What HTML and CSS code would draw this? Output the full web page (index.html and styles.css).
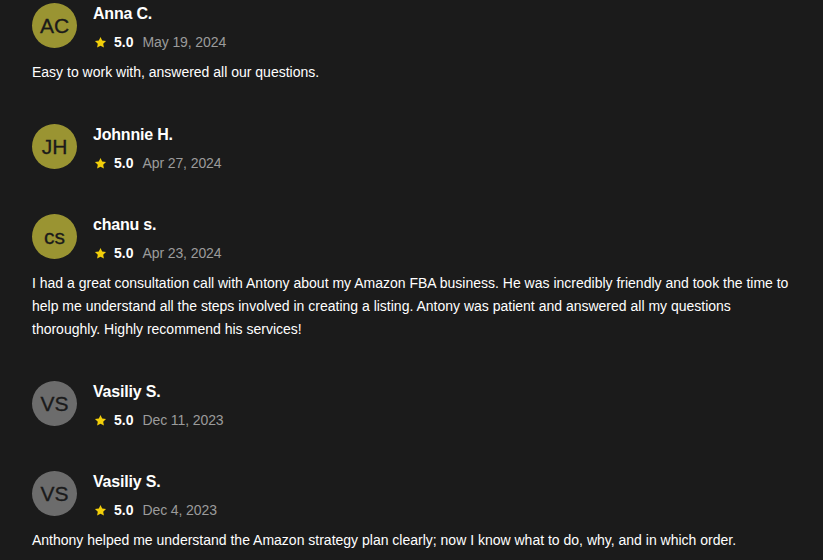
FILE: index.html
```html
<!DOCTYPE html>
<html>
<head>
<meta charset="utf-8">
<link rel="stylesheet" href="styles.css">
</head>
<body>
<div class="reviews">
  <div class="review">
    <div class="head">
      <div class="avatar olive">AC</div>
      <div class="info">
        <div class="name">Anna C.</div>
        <div class="rating"><svg class="star" viewBox="0 0 24 24"><path d="M12 1.8l3.1 6.5 7.1.9-5.2 4.9 1.3 7.1L12 17.8l-6.3 3.4 1.3-7.1-5.2-4.9 7.1-.9z"/></svg><span class="score">5.0</span><span class="date">May 19, 2024</span></div>
      </div>
    </div>
    <p class="text">Easy to work with, answered all our questions.</p>
  </div>
  <div class="review">
    <div class="head">
      <div class="avatar olive">JH</div>
      <div class="info">
        <div class="name">Johnnie H.</div>
        <div class="rating"><svg class="star" viewBox="0 0 24 24"><path d="M12 1.8l3.1 6.5 7.1.9-5.2 4.9 1.3 7.1L12 17.8l-6.3 3.4 1.3-7.1-5.2-4.9 7.1-.9z"/></svg><span class="score">5.0</span><span class="date">Apr 27, 2024</span></div>
      </div>
    </div>
  </div>
  <div class="review">
    <div class="head">
      <div class="avatar olive">cs</div>
      <div class="info">
        <div class="name">chanu s.</div>
        <div class="rating"><svg class="star" viewBox="0 0 24 24"><path d="M12 1.8l3.1 6.5 7.1.9-5.2 4.9 1.3 7.1L12 17.8l-6.3 3.4 1.3-7.1-5.2-4.9 7.1-.9z"/></svg><span class="score">5.0</span><span class="date">Apr 23, 2024</span></div>
      </div>
    </div>
    <p class="text">I had a great consultation call with Antony about my Amazon FBA business. He was incredibly friendly and took the time to help me understand all the steps involved in creating a listing. Antony was patient and answered all my questions thoroughly. Highly recommend his services!</p>
  </div>
  <div class="review">
    <div class="head">
      <div class="avatar grey">VS</div>
      <div class="info">
        <div class="name">Vasiliy S.</div>
        <div class="rating"><svg class="star" viewBox="0 0 24 24"><path d="M12 1.8l3.1 6.5 7.1.9-5.2 4.9 1.3 7.1L12 17.8l-6.3 3.4 1.3-7.1-5.2-4.9 7.1-.9z"/></svg><span class="score">5.0</span><span class="date">Dec 11, 2023</span></div>
      </div>
    </div>
  </div>
  <div class="review">
    <div class="head">
      <div class="avatar grey">VS</div>
      <div class="info">
        <div class="name">Vasiliy S.</div>
        <div class="rating"><svg class="star" viewBox="0 0 24 24"><path d="M12 1.8l3.1 6.5 7.1.9-5.2 4.9 1.3 7.1L12 17.8l-6.3 3.4 1.3-7.1-5.2-4.9 7.1-.9z"/></svg><span class="score">5.0</span><span class="date">Dec 4, 2023</span></div>
      </div>
    </div>
    <p class="text">Anthony helped me understand the Amazon strategy plan clearly; now I know what to do, why, and in which order.</p>
  </div>
</div>
</body>
</html>
```
FILE: styles.css
```css
html, body {
  margin: 0;
  padding: 0;
  background: #1b1b1b;
}
body {
  font-family: "Liberation Sans", Arial, sans-serif;
  color: #ffffff;
  overflow: hidden;
}
.reviews {
  padding: 3px 24px 0 32px;
}
.review {
  padding-bottom: 40px;
}
.head {
  display: flex;
  gap: 16px;
  align-items: flex-start;
}
.avatar {
  width: 45px;
  height: 45px;
  border-radius: 50%;
  display: flex;
  align-items: center;
  justify-content: center;
  font-size: 21px;
  color: #1a1a1a;
  flex-shrink: 0;
  -webkit-text-stroke: 0.3px #1a1a1a;
}
.olive { background: #9a9432; }
.grey { background: #6c6c6c; }
.info {
  display: flex;
  flex-direction: column;
  gap: 6px;
}
.name {
  font-size: 16px;
  font-weight: bold;
  line-height: 22px;
  letter-spacing: -0.2px;
}
.rating {
  display: flex;
  align-items: center;
  height: 22px;
  font-size: 14px;
}
.star {
  width: 13px;
  height: 13px;
  fill: #f2cf0a;
  margin-left: 1px;
  margin-right: 7px;
}
.score {
  font-weight: bold;
  margin-right: 9px;
}
.date {
  color: #9b9b9b;
  letter-spacing: -0.1px;
}
.text {
  margin: 8px 0 0;
  font-size: 14px;
  line-height: 23px;
}
```
